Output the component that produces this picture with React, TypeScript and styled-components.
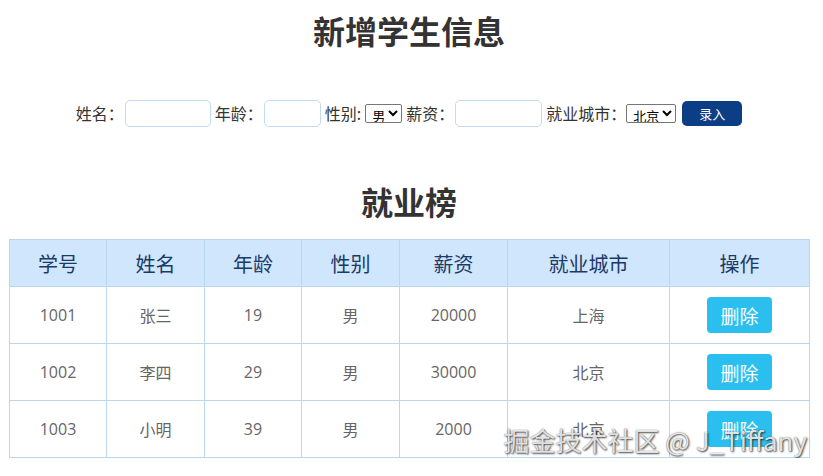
import styled, { createGlobalStyle } from "styled-components";

const GlobalStyle = createGlobalStyle`
  body {
    margin: 0;
    background: #fff;
    font-family: "Microsoft YaHei", "Noto Sans CJK SC", sans-serif;
    color: #333;
  }
`;

const Page = styled.div`
  position: relative;
  width: 800px;
  margin-left: 9px;
  padding-top: 8px;
`;

const Title = styled.h1`
  margin: 0;
  height: 44px;
  line-height: 44px;
  font-size: 32px;
  font-weight: 700;
  text-align: center;
  color: #333;
`;

const Form = styled.div`
  display: flex;
  justify-content: center;
  align-items: center;
  height: 26px;
  margin: 48px 0 53px;
  font-size: 16px;
  color: #333;
`;

const Field = styled.label`
  display: flex;
  align-items: center;
  margin-left: 4px;
  &:first-child {
    margin-left: 0;
  }
`;

const TextInput = styled.input<{ $w: number }>`
  box-sizing: border-box;
  width: ${(p) => p.$w}px;
  height: 27px;
  border: 1px solid #c3dbf0;
  border-radius: 5px;
  outline: none;
  margin-left: 1px;
`;

const Select = styled.select<{ $w: number; $gap?: number }>`
  box-sizing: border-box;
  width: ${(p) => p.$w}px;
  height: 19px;
  font-size: 13px;
  font-family: inherit;
  padding: 0 0 0 2px;
  border: 1px solid #767676;
  border-radius: 2px;
  background: #fff;
  color: #000;
  margin-left: ${(p) => p.$gap ?? 4}px;
`;

const Submit = styled.button`
  width: 60px;
  height: 25px;
  margin-left: 6px;
  border: none;
  border-radius: 5px;
  background: #0b3e85;
  color: #fff;
  font-size: 13px;
  font-family: inherit;
`;

const Table = styled.table`
  width: 800px;
  margin-top: 16px;
  border-collapse: collapse;
  text-align: center;
  table-layout: fixed;
`;

const Th = styled.th`
  height: 46px;
  padding: 0;
  background: #d0e6fc;
  border: 1px solid #b9d7ee;
  font-size: 20px;
  font-weight: 400;
  color: #1c3a68;
`;

const Td = styled.td`
  height: 56px;
  padding: 0;
  border: 1px solid #b9d7ee;
  font-family: "Open Sans", "Noto Sans CJK SC", sans-serif;
  font-size: 16px;
  color: #666;
`;

const DeleteButton = styled.button`
  width: 65px;
  height: 36px;
  border: none;
  border-radius: 4px;
  background: #2bbfef;
  color: #fff;
  font-size: 19px;
  font-family: "Microsoft YaHei", "Noto Sans CJK SC", sans-serif;
`;

const Watermark = styled.div`
  position: absolute;
  right: 2px;
  bottom: 0;
  font-size: 26px;
  color: rgba(255, 255, 255, 0.85);
  text-shadow: 1px 1px 2px rgba(0, 0, 0, 0.7), 0 0 1px rgba(0, 0, 0, 0.6);
  white-space: nowrap;
`;

const columns = [
  { name: "学号", width: 97 },
  { name: "姓名", width: 98 },
  { name: "年龄", width: 97 },
  { name: "性别", width: 98 },
  { name: "薪资", width: 108 },
  { name: "就业城市", width: 162 },
  { name: "操作", width: 140 },
];

const students = [
  { id: 1001, name: "张三", age: 19, gender: "男", salary: 20000, city: "上海" },
  { id: 1002, name: "李四", age: 29, gender: "男", salary: 30000, city: "北京" },
  { id: 1003, name: "小明", age: 39, gender: "男", salary: 2000, city: "北京" },
];

export default function App() {
  return (
    <Page>
      <GlobalStyle />
      <Title>新增学生信息</Title>
      <Form>
        <Field>
          姓名：<TextInput $w={86} />
        </Field>
        <Field>
          年龄：<TextInput $w={57} />
        </Field>
        <Field>
          性别:
          <Select $w={37} defaultValue="男">
            <option>男</option>
            <option>女</option>
          </Select>
        </Field>
        <Field>
          薪资：<TextInput $w={87} />
        </Field>
        <Field>
          就业城市：
          <Select $w={50} $gap={0} defaultValue="北京">
            <option>北京</option>
            <option>上海</option>
            <option>广州</option>
          </Select>
        </Field>
        <Submit>录入</Submit>
      </Form>
      <Title>就业榜</Title>
      <Table>
        <colgroup>
          {columns.map((c) => (
            <col key={c.name} style={{ width: c.width }} />
          ))}
        </colgroup>
        <thead>
          <tr>
            {columns.map((c) => (
              <Th key={c.name}>{c.name}</Th>
            ))}
          </tr>
        </thead>
        <tbody>
          {students.map((s) => (
            <tr key={s.id}>
              <Td>{s.id}</Td>
              <Td>{s.name}</Td>
              <Td>{s.age}</Td>
              <Td>{s.gender}</Td>
              <Td>{s.salary}</Td>
              <Td>{s.city}</Td>
              <Td>
                <DeleteButton>删除</DeleteButton>
              </Td>
            </tr>
          ))}
        </tbody>
      </Table>
      <Watermark>掘金技术社区 @ J_Tiffany</Watermark>
    </Page>
  );
}
